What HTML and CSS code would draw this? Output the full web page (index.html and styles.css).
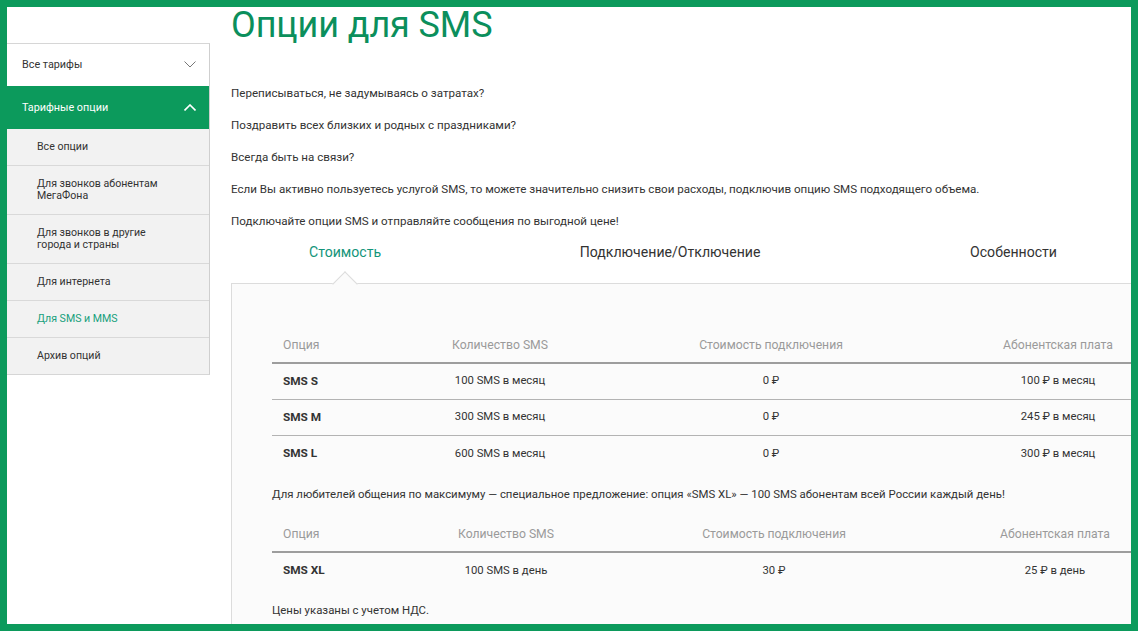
FILE: index.html
```html
<!DOCTYPE html>
<html lang="ru">
<head>
<meta charset="utf-8">
<title>Опции для SMS</title>
<link rel="stylesheet" href="styles.css">
</head>
<body>
<div class="frame">
  <aside class="sidebar">
    <div class="nav-top">
      <span>Все тарифы</span>
      <svg class="chev" width="12" height="7" viewBox="0 0 12 7"><path d="M0.5 0.5 L6 6 L11.5 0.5" fill="none" stroke="#777" stroke-width="1"/></svg>
    </div>
    <div class="nav-top nav-active">
      <span>Тарифные опции</span>
      <svg class="chev" width="12" height="7" viewBox="0 0 12 7"><path d="M0.5 6.5 L6 1 L11.5 6.5" fill="none" stroke="#fff" stroke-width="1.6"/></svg>
    </div>
    <ul class="subnav">
      <li>Все опции</li>
      <li class="two">Для звонков абонентам<br>МегаФона</li>
      <li class="two">Для звонков в другие<br>города и страны</li>
      <li>Для интернета</li>
      <li class="current">Для SMS и MMS</li>
      <li>Архив опций</li>
    </ul>
  </aside>
  <main class="main">
    <h1 class="title">Опции для SMS</h1>
    <p class="lead">Переписываться, не задумываясь о затратах?</p>
    <p class="lead">Поздравить всех близких и родных с праздниками?</p>
    <p class="lead">Всегда быть на связи?</p>
    <p class="lead">Если Вы активно пользуетесь услугой SMS, то можете значительно снизить свои расходы, подключив опцию SMS подходящего объема.</p>
    <p class="lead">Подключайте опции SMS и отправляйте сообщения по выгодной цене!</p>
    <nav class="tabs">
      <span class="tab tab-active">Стоимость</span>
      <span class="tab tab-mid">Подключение/Отключение</span>
      <span class="tab">Особенности</span>
    </nav>
    <section class="panel">
      <div class="table t1">
        <div class="row head"><span class="c1">Опция</span><span>Количество SMS</span><span>Стоимость подключения</span><span>Абонентская плата</span></div>
        <div class="row"><span class="c1 name">SMS S</span><span>100 SMS в месяц</span><span>0 ₽</span><span>100 ₽ в месяц</span></div>
        <div class="row"><span class="c1 name">SMS M</span><span>300 SMS в месяц</span><span>0 ₽</span><span>245 ₽ в месяц</span></div>
        <div class="row last"><span class="c1 name">SMS L</span><span>600 SMS в месяц</span><span>0 ₽</span><span>300 ₽ в месяц</span></div>
      </div>
      <p class="note">Для любителей общения по максимуму — специальное предложение: опция «SMS XL» — 100 SMS абонентам всей России каждый день!</p>
      <div class="table t2">
        <div class="row head"><span class="c1">Опция</span><span>Количество SMS</span><span>Стоимость подключения</span><span>Абонентская плата</span></div>
        <div class="row last"><span class="c1 name">SMS XL</span><span>100 SMS в день</span><span>30 ₽</span><span>25 ₽ в день</span></div>
      </div>
      <p class="note vat">Цены указаны с учетом НДС.</p>
    </section>
  </main>
</div>
</body>
</html>
```

FILE: styles.css
```css
* { box-sizing: border-box; }
html, body { margin: 0; padding: 0; background: #fff; }
body {
  font-family: Roboto, "Noto Sans", "DejaVu Sans", sans-serif;
  color: #333;
}
.frame {
  width: 1138px;
  height: 631px;
  border: 7px solid #0c9a5c;
  overflow: hidden;
  display: flex;
  align-items: flex-start;
  background: #fff;
}
.sidebar {
  flex: 0 0 203px;
  width: 203px;
  margin-top: 36px;
  border-top: 1px solid #d6d6d6;
  border-right: 1px solid #cfcfcf;
  border-bottom: 1px solid #d6d6d6;
}
.nav-top {
  height: 43px;
  display: flex;
  align-items: center;
  justify-content: space-between;
  padding: 0 13px 1px 15px;
  font-size: 10.8px;
  color: #333;
  background: #fff;
}
.nav-top:first-child { height: 42px; }
.nav-active {
  background: #0c9a5c;
  color: #fff;
}
.subnav {
  list-style: none;
  margin: 0;
  padding: 0;
  background: #f2f2f2;
}
.subnav li {
  height: 37px;
  display: flex;
  align-items: center;
  padding-left: 30px;
  font-size: 10.6px;
  line-height: 12.5px;
  color: #333;
  border-bottom: 1px solid #d9d9d9;
}
.subnav li:last-child { border-bottom: none; height: 36px; }
.subnav li.two { height: 49px; }
.subnav li.current { color: #16a07c; }

.main {
  flex: 0 0 auto;
  width: 930px;
  margin-left: 21px;
}
.title {
  margin: 0;
  font-size: 36px;
  line-height: 36px;
  font-weight: 400;
  color: #0b8f5c;
  letter-spacing: -0.1px;
}
.lead {
  margin: 0 0 12px;
  font-size: 11.6px;
  line-height: 20px;
  color: #333;
}
.title + .lead { margin-top: 40px; }
.tabs {
  display: flex;
  justify-content: space-between;
  width: 908px;
  padding: 0 82px 0 78px;
  height: 44px;
  margin-top: -13px;
  align-items: center;
}
.tab {
  font-size: 14.1px;
  color: #333;
}
.tab-mid { margin-right: 11px; }
.tab-active { color: #14957a; }
.panel {
  position: relative;
  width: 960px;
  border-top: 1px solid #dcdcdc;
  border-left: 1px solid #dcdcdc;
  background: #fbfbfb;
  padding: 43px 0 0 40px;
  margin-top: 9px;
  height: 400px;
}
.panel::before {
  content: "";
  position: absolute;
  top: -9px;
  left: 104px;
  width: 17px;
  height: 17px;
  background: #fbfbfb;
  border-top: 1px solid #dcdcdc;
  border-left: 1px solid #dcdcdc;
  transform: rotate(45deg);
}
.table { width: 902px; }
.row {
  display: grid;
  align-items: center;
  height: 36px;
  padding-bottom: 2px;
  border-bottom: 1px solid #b3b3b3;
  font-size: 11.3px;
  color: #333;
}
.t1 .row { grid-template-columns: 128px 200px 342px 232px; }
.t2 .row { grid-template-columns: 128px 212px 324px 238px; }
.row > span { text-align: center; }
.row > .c1 { text-align: left; padding-left: 11px; }
.row.head {
  height: 37px;
  padding-bottom: 0;
  border-bottom: 2px solid #9d9d9d;
  color: #9a9a9a;
  font-size: 12.2px;
}
.row.last { border-bottom: none; }
.name { font-weight: 700; color: #333; font-size: 11.8px; }
.note {
  margin: 12px 0 0;
  font-size: 11.4px;
  line-height: 20px;
  color: #333;
}
.t2 { margin-top: 12px; }
.vat { margin-top: 11px; }
```
